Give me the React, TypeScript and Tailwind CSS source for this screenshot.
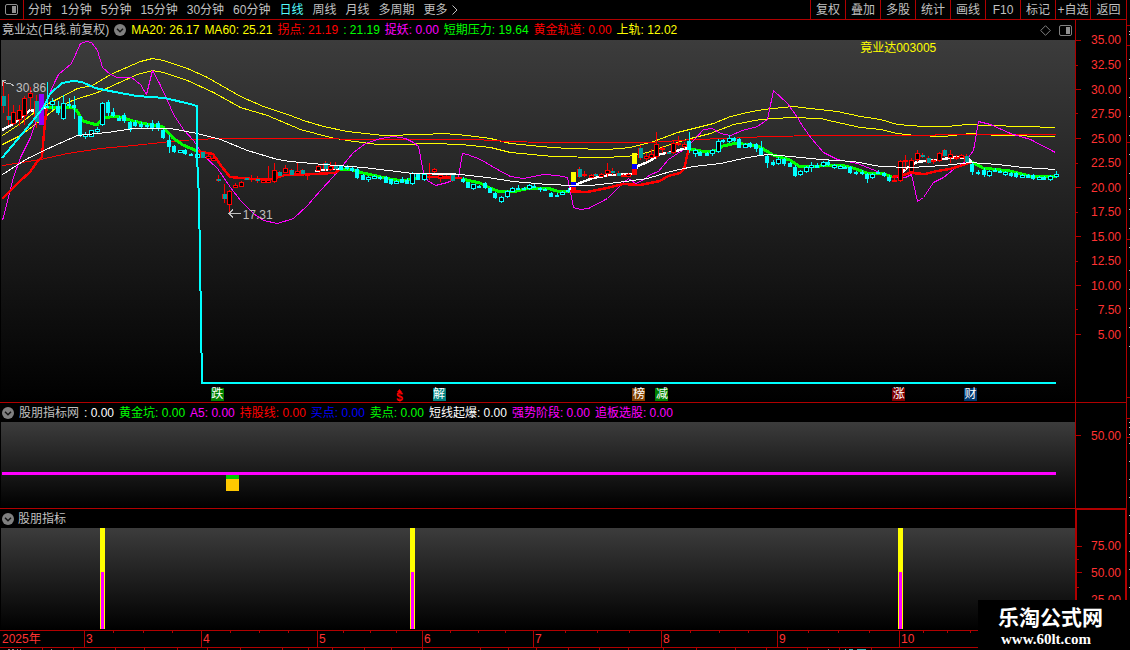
import type { ReactNode } from "react";

type Point = [number, number];
type Kind = "r" | "t" | "c" | "h";
type Candle = [Kind, number, number, number, number, number];

const CHART_W = 1075;

const periods = ["分时", "1分钟", "5分钟", "15分钟", "30分钟", "60分钟", "日线", "周线", "月线", "多周期"];
const tools = ["复权", "叠加", "多股", "统计", "画线", "F10", "标记", "+自选", "返回"];

const mainLegend = [
  { text: "MA20: 26.17", color: "text-[#ffff00]" },
  { text: "MA60: 25.21", color: "text-[#ffff00]" },
  { text: "拐点: 21.19", color: "text-[#ff0000]" },
  { text: ": 21.19", color: "text-[#00ff00]" },
  { text: "捉妖: 0.00", color: "text-[#ff00ff]" },
  { text: "短期压力: 19.64", color: "text-[#00ff00]" },
  { text: "黄金轨道: 0.00", color: "text-[#ff0000]" },
  { text: "上轨: 12.02", color: "text-[#ffff00]" },
];

const subLegend = [
  { text: ": 0.00", color: "text-white" },
  { text: "黄金坑: 0.00", color: "text-[#00ff00]" },
  { text: "A5: 0.00", color: "text-[#ff00ff]" },
  { text: "持股线: 0.00", color: "text-[#ff0000]" },
  { text: "买点: 0.00", color: "text-[#0000ff]" },
  { text: "卖点: 0.00", color: "text-[#00ff00]" },
  { text: "短线起爆: 0.00", color: "text-white" },
  { text: "强势阶段: 0.00", color: "text-[#ff00ff]" },
  { text: "追板选股: 0.00", color: "text-[#ff00ff]" },
];

const upperBand: Point[] = [[2,135],[20,123],[40,107],[58,98],[77,88],[92,85],[110,74],[140,61],[152,58],[163,60],[187,68],[207,77],[240,96],[263,106],[290,115],[303,120],[323,126],[347,131],[383,135],[423,134],[443,133],[467,135],[490,138],[510,143],[540,146],[567,148],[607,149],[630,147],[653,141],[677,132],[693,128],[713,123],[730,116],[747,112],[763,109],[793,106],[810,108],[837,111],[860,116],[880,119],[897,124],[923,126],[947,126],[967,124],[987,125],[1023,126],[1055,127]];
const lowerBand: Point[] = [[2,144],[20,135],[40,120],[55,108],[72,100],[97,92],[117,83],[137,74],[152,70],[163,72],[187,80],[213,92],[240,107],[267,115],[300,129],[330,137],[347,140],[377,144],[397,144],[433,143],[460,144],[490,147],[510,152],[553,156],[600,157],[627,156],[647,152],[667,145],[690,138],[710,133],[733,124],[760,119],[790,117],[820,118],[833,121],[860,127],[880,129],[897,133],[915,135],[943,136],[970,133],[997,135],[1055,136]];
const demon: Point[] = [[2,220],[8,197],[13,177],[20,157],[30,137],[35,122],[43,107],[55,80],[58,74],[71,63],[80,43],[86,41],[91,42],[97,50],[102,67],[110,74],[117,77],[131,77],[140,84],[146,94],[152,70],[159,83],[167,100],[173,114],[183,129],[193,140],[203,155],[217,168],[230,187],[240,200],[253,213],[263,220],[277,223],[293,218],[307,205],[320,190],[333,176],[343,164],[353,152],[365,143],[380,138],[393,136],[405,138],[413,142],[418,146],[423,172],[427,180],[435,185],[447,182],[458,177],[462,153],[467,154],[480,159],[497,169],[510,176],[523,178],[543,174],[557,175],[567,177],[573,207],[580,209],[588,208],[607,198],[622,183],[628,178],[635,183],[642,180],[650,174],[658,171],[668,159],[677,153],[685,148],[695,138],[703,129],[712,128],[720,133],[730,135],[742,130],[757,126],[767,119],[773,90],[787,103],[797,117],[803,127],[811,138],[823,152],[837,159],[857,163],[877,171],[890,177],[905,177],[911,174],[917,201],[923,197],[933,182],[943,177],[953,169],[965,161],[973,150],[978,121],[990,124],[1010,133],[1030,139],[1055,152]];
const longMa: Point[] = [[2,174],[27,158],[50,147],[77,135],[107,132],[133,128],[170,128],[197,133],[220,139],[247,150],[277,159],[290,161],[323,164],[363,167],[413,173],[460,174],[487,177],[513,181],[547,184],[573,185],[590,185],[617,182],[647,178],[670,171],[693,166],[720,163],[747,157],[767,154],[790,156],[820,159],[853,161],[880,166],[910,167],[943,165],[970,162],[997,164],[1023,167],[1055,169]];
const goldTrack: Point[] = [[2,165],[40,159],[67,153],[100,148],[133,145],[180,140],[217,138],[280,138],[397,139],[480,139],[487,140],[540,142],[650,142],[693,139],[727,138],[767,136],[820,135],[934,135],[936,134],[1055,134]];
const pressure: Point[] = [[2,157],[27,127],[43,107],[50,93],[62,82],[73,80],[82,81],[95,87],[115,91],[137,95],[165,97],[190,103],[197,105],[197,155],[199,197],[202,382],[1056,382]];

const supportRuns: Point[][] = [
  [[2,199],[20,181],[30,172],[37,162],[42,157],[44,133],[46,113],[47,107]],
  [[197,151],[213,154],[222,167],[230,177],[253,179],[273,179],[285,175],[313,174],[335,173],[340,169]],
  [[427,177],[462,178]],
  [[568,191],[587,192],[607,188],[623,184],[640,185],[660,181],[668,176],[680,173],[684,169],[689,148]],
  [[890,177],[900,176],[910,173],[925,174],[937,171],[950,169],[960,166],[972,162]],
];
const strongRuns: Point[][] = [
  [[2,130],[13,124],[23,116],[30,110],[35,111],[47,107]],
  [[315,171],[330,169],[340,169]],
  [[427,174],[456,174]],
  [[568,190],[577,184],[593,178],[610,175],[632,174],[638,166],[650,161],[660,154],[673,152],[683,149],[689,148]],
  [[898,176],[907,168],[917,162],[943,159],[957,157],[967,158],[972,162]],
];
const weakRuns: Point[][] = [
  [[47,107],[72,107],[77,111],[83,121],[97,125],[103,118],[117,116],[133,121],[147,124],[163,127],[173,138],[183,145],[197,151]],
  [[340,169],[353,170],[363,173],[390,179],[403,181],[420,177]],
  [[462,179],[480,183],[490,188],[500,192],[517,191],[530,188],[547,188],[557,191],[570,191]],
  [[690,149],[707,152],[717,150],[723,146],[737,143],[760,147],[773,155],[790,160],[800,167],[840,165],[853,168],[867,173],[882,173],[892,177]],
  [[972,162],[983,168],[1010,171],[1030,176],[1057,176]],
];

/* kind, x, high, open/close top, open/close bottom, low */
const candles: Candle[] = [
  ["t",3,80,96,106,113],["t",8,94,116,120,125],["r",13,105,112,124,125],["r",19,105,110,120,126],["r",24,96,98,116,125],["r",30,87,93,98,110],["t",36,95,101,122,128],
  ["c",47,82,106,108,108],["h",52,98,101,105,110],["c",58,101,106,113,115],["h",63,95,103,119,120],["c",69,98,104,106,108],["c",74,96,105,108,119],["c",80,116,116,136,137],["h",85,132,134,137,139],["h",91,130,130,137,137],["h",97,127,129,132,133],["h",102,102,103,125,126],["c",108,100,102,113,116],["c",113,108,112,116,117],["c",119,116,118,121,121],["c",124,113,115,121,123],["c",130,121,122,130,132],["c",135,120,122,126,127],["c",141,122,124,127,128],["c",147,123,125,127,128],["c",152,120,123,129,131],["c",158,121,123,129,131],["c",163,128,130,138,139],["c",169,135,140,147,153],["c",174,145,146,152,153],["h",180,150,150,153,153],["c",185,149,150,154,155],["c",191,153,154,156,156],["h",197,153,154,158,159],
  ["t",202,152,152,158,158],["r",208,154,156,159,159],["r",213,157,158,161,161],["t",218,175,179,181,182],["t",224,184,194,199,203],["r",229,190,191,205,213],["r",235,183,185,188,188],["r",241,181,182,187,187],["t",246,177,178,180,180],["r",251,175,178,180,182],["t",257,176,179,181,183],["r",263,179,180,183,183],["r",268,166,180,183,183],["r",274,163,170,182,183],["t",279,171,172,176,177],["r",285,165,168,173,173],["t",291,169,170,175,176],["r",297,163,171,174,175],["t",302,169,170,174,175],["r",307,173,174,175,180],["r",318,164,166,171,171],["t",325,161,163,169,171],["r",330,162,166,170,171],["t",335,162,166,169,170],
  ["c",341,165,166,170,170],["c",347,165,166,169,170],["c",352,167,168,171,172],["c",357,168,169,178,179],["c",363,174,175,180,180],["h",368,176,177,180,182],["h",374,175,176,179,179],["c",380,176,177,179,180],["c",386,176,177,183,183],["c",391,179,179,184,185],["h",396,180,181,184,184],["c",402,177,179,183,183],["c",407,178,180,184,184],["h",412,172,173,184,185],["c",418,173,174,180,180],["h",424,173,174,180,181],
  ["r",429,163,173,175,180],["r",434,168,169,172,174],["r",440,174,175,178,182],["r",446,175,176,178,179],["t",452,174,175,181,182],["c",463,177,179,182,183],["c",468,182,182,188,188],["h",473,184,184,189,190],["c",479,185,186,188,188],["c",485,182,183,188,189],["c",490,187,188,193,193],["c",495,192,193,198,199],["h",501,196,197,202,203],["h",507,190,191,197,198],["h",512,187,188,192,192],["c",518,185,188,190,190],["c",524,187,188,190,190],["h",529,184,185,189,190],["c",534,184,186,188,188],["c",540,187,188,190,192],["c",545,188,189,191,191],["c",551,192,193,197,197],["c",557,193,195,196,197],["h",562,191,192,195,195],["c",568,188,190,192,193],
  ["t",579,167,169,177,178],["r",584,171,174,176,177],["r",591,174,175,178,178],["t",595,173,174,176,177],["r",601,173,174,177,177],["r",607,163,170,174,177],["t",612,168,171,173,175],["t",618,171,173,176,176],["r",623,174,175,176,177],["r",628,173,174,177,177],["t",640,145,148,158,160],["r",646,153,156,159,161],["r",651,149,154,158,158],["r",656,132,144,157,159],["r",662,146,148,149,153],["t",668,151,152,154,154],["r",673,140,143,153,154],["r",678,136,143,145,146],["r",684,142,144,147,149],
  ["c",689,132,141,150,153],["h",695,149,150,154,157],["c",700,151,152,156,156],["c",707,152,153,156,156],["h",712,149,150,154,156],["h",718,139,141,152,153],["c",723,139,140,142,143],["h",729,135,138,142,143],["c",734,137,138,141,142],["c",739,138,139,148,148],["h",745,143,144,148,148],["c",750,142,143,147,148],["c",756,143,144,149,152],["c",761,141,148,155,156],["c",767,154,156,163,168],["c",773,160,162,165,166],["h",778,157,159,164,165],["c",784,158,159,164,166],["c",790,162,163,167,167],["c",795,165,167,176,177],["h",800,170,171,175,176],["h",806,166,167,172,173],["h",811,162,165,168,172],["c",817,163,165,168,168],["h",823,161,162,166,167],["c",828,160,162,165,166],["h",834,164,165,168,169],["h",840,165,166,169,169],["c",845,166,167,169,169],["c",850,166,167,173,174],["c",856,171,172,174,175],["c",862,170,172,174,175],["c",867,173,174,179,183],["h",872,173,174,178,179],["c",878,170,172,174,174],["c",884,172,173,176,177],["c",889,175,177,181,182],
  ["r",894,178,180,182,182],["r",900,160,161,181,182],["r",905,155,160,162,170],["r",911,158,160,172,174],["r",917,150,153,160,162],["t",922,153,155,157,158],["t",928,156,158,163,164],["r",933,159,160,162,164],["r",939,152,153,161,162],["t",944,149,150,156,157],["r",950,150,154,158,163],["r",956,155,157,159,160],["r",961,154,155,158,158],["t",966,154,156,162,162],
  ["c",972,162,164,172,175],["c",978,170,172,173,175],["c",984,168,170,175,177],["h",989,170,171,176,177],["c",995,168,170,172,172],["c",1000,170,171,173,173],["h",1005,171,172,175,176],["c",1011,172,173,176,177],["c",1016,172,173,177,178],["h",1022,174,175,178,178],["c",1028,174,175,178,178],["c",1033,174,175,179,180],["h",1039,176,177,180,180],["c",1044,176,177,180,180],["h",1050,175,176,180,181],["h",1056,171,174,177,178],
];

const blocks = [
  { x: 39, y: 94, w: 5, h: 31, fill: "#9000ff" },
  { x: 571, y: 172, w: 5, h: 10, fill: "#ffff00" },
  { x: 571, y: 182, w: 5, h: 5, fill: "#0000ff" },
  { x: 571, y: 187, w: 5, h: 6, fill: "#ff0000" },
  { x: 632, y: 153, w: 5, h: 11, fill: "#ffff00" },
  { x: 632, y: 164, w: 5, h: 5, fill: "#0000ff" },
  { x: 632, y: 169, w: 5, h: 6, fill: "#ff0000" },
];

const markers = [
  { x: 211, text: "跌", bg: "bg-[#008000]" },
  { x: 433, text: "解", bg: "bg-[#008080]" },
  { x: 633, text: "榜", bg: "bg-[#804000]" },
  { x: 656, text: "减", bg: "bg-[#008000]" },
  { x: 893, text: "涨", bg: "bg-[#800000]" },
  { x: 965, text: "财", bg: "bg-[#003870]" },
];

const priceTicks = ["35.00", "32.50", "30.00", "27.50", "25.00", "22.50", "20.00", "17.50", "15.00", "12.50", "10.00", "7.50", "5.00"].map(
  (label, i) => ({ label, at: (i * 24.5 + 0.5) / 362, major: i % 2 === 0 }),
);

const months = [
  { label: "3", x: 84, next: 201 },
  { label: "4", x: 201, next: 317 },
  { label: "5", x: 317, next: 422 },
  { label: "6", x: 422, next: 533 },
  { label: "7", x: 533, next: 661 },
  { label: "8", x: 661, next: 777 },
  { label: "9", x: 777, next: 899 },
  { label: "10", x: 899, next: 994 },
];

const stripDividers = [42, 73, 115, 144, 177, 207, 240, 282, 308, 332, 364, 391, 422, 480, 508, 536, 568, 599, 628, 663, 696, 735, 766, 807, 839, 871];
const signals = [100, 410, 898];
const pct = (x: number) => `${(x / CHART_W) * 100}%`;
const path = (pts: Point[]) => pts.map((p) => p.join(",")).join(" ");

function Line({ pts, color, width = 1 }: { pts: Point[]; color: string; width?: number }) {
  return <polyline points={path(pts)} fill="none" stroke={color} strokeWidth={width} strokeLinejoin="round" />;
}

function CandleBar({ candle }: { candle: Candle }) {
  const [kind, x, high, top, bottom, low] = candle;
  const edge = kind === "r" || kind === "t" ? "#ff0000" : "#00ffff";
  const hollow = kind === "r" || kind === "h";
  const h = Math.max(bottom - top, 2);
  return (
    <g>
      <rect x={x} y={high} width={1} height={Math.max(low - high, 1)} fill={edge} />
      <rect x={x - 2} y={top} width={kind === "c" ? 4 : 5} height={h} fill={kind === "t" ? "#00a0a0" : edge} />
      {kind === "t" && <rect x={x - 2} y={top} width={1} height={h} fill={edge} />}
      {hollow && h > 2 && <rect x={x - 1} y={top + 1} width={3} height={h - 2} fill="#000" />}
    </g>
  );
}

function PanelIcon({ dim = false }: { dim?: boolean }) {
  return (
    <svg viewBox="0 0 13 11" className="h-[11px] w-[13px]" aria-hidden="true">
      <rect x="0.5" y="0.5" width="12" height="10" rx="1.5" fill="none" stroke={dim ? "#808080" : "#909090"} />
      <rect x="7" y="2" width="4" height="7" fill="#909090" />
    </svg>
  );
}

function FoldButton({ label }: { label: string }) {
  return (
    <button type="button" aria-label={label} className="shrink-0">
      <svg viewBox="0 0 12 12" className="block h-3 w-3" aria-hidden="true">
        <circle cx="6" cy="6" r="6" fill="#808080" />
        <path d="M3 4.7 6 7.7 9 4.7" fill="none" stroke="#141414" strokeWidth="1.5" />
      </svg>
    </button>
  );
}

function Scale({ ticks, framed = false }: { ticks: { label?: string; at: number; major: boolean }[]; framed?: boolean }) {
  return (
    <div className={framed ? "relative w-[50px] border border-b-0 border-[#b00000]" : "relative w-[50px]"}>
      <div className={framed ? "absolute inset-x-0 top-[18px] bottom-0" : "absolute inset-x-0 top-5 bottom-0"}>
        {ticks.map((t) => (
          <div key={t.at} className="absolute inset-x-0 flex h-0 items-center" style={{ top: `${t.at * 100}%` }}>
            <span className={t.major ? "h-px w-[5px] bg-[#b00000]" : "h-px w-0.5 bg-[#b00000]"} />
            <span className={framed ? "ml-auto pr-1 text-[#ff3232]" : "ml-auto pr-[5px] text-[#ff3232]"}>{t.label}</span>
          </div>
        ))}
      </div>
    </div>
  );
}

function Pane({ size, header, scale, children }: { size: string; header: ReactNode; scale: ReactNode; children: ReactNode }) {
  return (
    <section className={`flex min-h-0 basis-0 border-b border-[#b00000] ${size}`}>
      <div className="flex min-w-0 flex-1 flex-col border-r border-[#b00000]">
        {header}
        <div className="relative ml-px min-h-0 flex-1 bg-[linear-gradient(#3c3c3c,#000000)]">{children}</div>
      </div>
      {scale}
    </section>
  );
}

function Plot({ top, height, children }: { top: number; height: number; children: ReactNode }) {
  return (
    <svg
      viewBox={`1 ${top} ${CHART_W - 1} ${height}`}
      preserveAspectRatio="none"
      shapeRendering="crispEdges"
      className="absolute inset-0 h-full w-full"
      aria-hidden="true"
    >
      {children}
    </svg>
  );
}

export default function App() {
  return (
    <div className="relative flex h-screen overflow-hidden bg-black font-['Liberation_Sans','Noto_Sans_CJK_SC',sans-serif] text-xs leading-4 whitespace-nowrap text-[#c0c0c0]">
      <div className="flex min-w-0 flex-1 flex-col border-r border-[#b00000]">
        <nav className="flex h-5 shrink-0 items-stretch border-b border-[#b00000]">
          <button type="button" aria-label="侧栏" className="flex w-6 items-center justify-center border-r border-[#b00000]">
            <PanelIcon />
          </button>
          <div className="flex flex-1 items-center gap-[9px] pl-1">
            {periods.map((p) => (
              <button key={p} type="button" className={p === "日线" ? "text-[#54fcfc]" : ""}>
                {p}
              </button>
            ))}
            <button type="button" className="flex items-center gap-1">
              更多
              <svg viewBox="0 0 6 10" className="h-2.5 w-1.5" aria-hidden="true">
                <path d="M.5.5 5 5 .5 9.5" fill="none" stroke="#c0c0c0" />
              </svg>
            </button>
          </div>
          {tools.map((t) => (
            <button key={t} type="button" className="w-[35px] border-l border-[#b00000] text-center last:w-9">
              {t}
            </button>
          ))}
        </nav>

        <Pane
          size="grow-[382]"
          header={
            <header className="flex h-5 shrink-0 items-center gap-[5px] pl-0.5">
              <h1>竟业达(日线.前复权)</h1>
              <FoldButton label="主图指标" />
              {mainLegend.map((l) => (
                <span key={l.text} className={l.color}>
                  {l.text}
                </span>
              ))}
              <div className="ml-auto flex items-center gap-2 pr-[3px]">
                <button type="button" aria-label="标注">
                  <svg viewBox="0 0 11 11" className="block h-[11px] w-[11px]" aria-hidden="true">
                    <path d="M5.5.7 10.3 5.5 5.5 10.3.7 5.5Z" fill="none" stroke="#808080" />
                  </svg>
                </button>
                <button type="button" aria-label="面板">
                  <PanelIcon dim />
                </button>
              </div>
            </header>
          }
          scale={<Scale ticks={priceTicks} />}
        >
          <Plot top={40} height={362}>
            <g transform="translate(0.5 0.5)">
              <Line pts={upperBand} color="#ffff00" />
              <Line pts={lowerBand} color="#ffff00" />
              <Line pts={goldTrack} color="#ff0000" />
              <Line pts={demon} color="#ff00ff" />
            </g>
            {supportRuns.map((r, i) => (
              <Line key={i} pts={r} color="#ff0000" width={2.4} />
            ))}
            {strongRuns.map((r, i) => (
              <Line key={i} pts={r} color="#ffffff" width={2.4} />
            ))}
            {weakRuns.map((r, i) => (
              <Line key={i} pts={r} color="#00ff00" width={3} />
            ))}
            {candles.map((c) => (
              <CandleBar key={c[1]} candle={c} />
            ))}
            {blocks.map((b) => (
              <rect key={`${b.x}-${b.y}`} x={b.x} y={b.y} width={b.w} height={b.h} fill={b.fill} />
            ))}
            <g transform="translate(0.5 0.5)">
              <Line pts={longMa} color="#ffffff" />
            </g>
            <g transform="translate(0 1)">
              <Line pts={pressure} color="#00ffff" width={2} />
            </g>
            <path d="M2.5 86V80.500H6M2.500 81.500 7 83.500 10 83.500 14 86" fill="none" stroke="#c0c0c0" />
            <path d="M229 213.500H241M233 209.500 229 213.500 233 217.500" fill="none" stroke="#c0c0c0" />
          </Plot>
          <span className="absolute top-[11%] left-[1.4%]">30.86</span>
          <span className="absolute top-[46%] left-[22.5%]">17.31</span>
          <span className="absolute top-0 left-[80%] text-[#ffff00]">竟业达003005</span>
          {markers.map((m) => (
            <span
              key={m.x}
              className={`absolute bottom-px h-[13px] w-[13px] text-center leading-[13px] text-white ${m.bg}`}
              style={{ left: pct(m.x - 1) }}
            >
              {m.text}
            </span>
          ))}
          <span className="absolute bottom-0 left-[36.8%] flex flex-col items-center font-bold text-[#ff0000]">
            <svg viewBox="0 0 5 3" className="h-[3px] w-[5px]" aria-hidden="true">
              <path d="M2.500 0 5 3H0Z" fill="#ff0000" />
            </svg>
            <span className="leading-[10px]">$</span>
          </span>
        </Pane>

        <Pane
          size="grow-[105]"
          header={
            <header className="flex h-[19px] shrink-0 items-center gap-[5px] pl-0.5">
              <FoldButton label="股朋指标网" />
              <h2>股朋指标网</h2>
              {subLegend.map((l) => (
                <span key={l.text} className={l.color}>
                  {l.text}
                </span>
              ))}
            </header>
          }
          scale={<Scale ticks={[{ label: "50.00", at: 0.15, major: true }]} />}
        >
          <Plot top={422} height={86}>
            <rect x="2" y="472" width="1054" height="3" fill="#ff00ff" />
            <rect x="226" y="475" width="13" height="4" fill="#00c800" />
            <rect x="226" y="479" width="13" height="12" fill="#ffc800" />
          </Plot>
        </Pane>

        <Pane
          size="grow-[121]"
          header={
            <header className="flex h-[19px] shrink-0 items-center gap-1 pl-0.5">
              <FoldButton label="股朋指标" />
              <h2>股朋指标</h2>
            </header>
          }
          scale={
            <Scale
              framed
              ticks={[
                { label: "75.00", at: 0.18, major: true },
                { at: 0.31, major: false },
                { label: "50.00", at: 0.44, major: true },
                { at: 0.58, major: false },
                { label: "25.00", at: 0.71, major: true },
              ]}
            />
          }
        >
          <Plot top={528} height={102}>
            {signals.map((x) => (
              <g key={x}>
                <rect x={x} y="528" width="5" height="101" fill="#ffff00" />
                <rect x={x + 1} y="572" width="3" height="57" fill="#ff00ff" />
              </g>
            ))}
          </Plot>
        </Pane>

        <div className="mr-[51px] h-4 shrink-0 text-[#ff3232]">
          <div className="relative h-full">
            <span className="absolute left-0.5">2025年</span>
            {months.map((m) => (
              <span key={m.x} className="absolute h-full border-l border-[#b00000] pl-px" style={{ left: pct(m.x) }}>
                {m.label}
              </span>
            ))}
            {months.flatMap((m) =>
              [1, 2, 3].map((k) => (
                <span
                  key={`${m.x}-${k}`}
                  className="absolute h-0.5 w-px bg-[#b00000]"
                  style={{ left: pct(m.x + ((m.next - m.x) * k) / 4) }}
                />
              )),
            )}
          </div>
        </div>
        <svg viewBox="0 0 1126 3" preserveAspectRatio="none" shapeRendering="crispEdges" className="h-[3px] w-full shrink-0 border-t border-[#b00000]" aria-hidden="true">
          {stripDividers.map((x) => (
            <rect key={x} x={x} y="0" width="1" height="3" fill="#b00000" />
          ))}
          <path d="M8 2.500h2m2 0h2m3 0h1m2 0h1M51 2.500h1M828 2.500h1" stroke="#c0c0c0" />
          <path d="M845 2.500h1m3 0h4m4 0h9" stroke="#54fcfc" />
        </svg>
      </div>

      <svg viewBox="0 0 3 650" preserveAspectRatio="none" shapeRendering="crispEdges" className="h-full w-[3px] shrink-0" aria-hidden="true">
        {[25, 45, 142, 239, 397, 418, 437].map((y) => (
          <rect key={y} x="0" y={y} width="3" height="1" fill="#b00000" />
        ))}
        {[31, 34, 59, 78, 97, 116, 135, 154, 173, 198, 209, 228, 247, 270, 289, 308, 327, 346, 422, 427, 434, 443, 461, 479, 497, 515, 533, 551, 569, 587].map((y) => (
          <rect key={y} x="2" y={y} width="1" height="1" fill="#c0c0c0" />
        ))}
      </svg>

      <aside className="absolute right-0 bottom-0 flex h-[50px] w-[152px] flex-col items-start bg-black pt-1.5 pl-5 text-white">
        <strong className="text-[21px] leading-6 font-bold">乐淘公式网</strong>
        <a href="#" className="pl-[3px] font-['Liberation_Serif',serif] text-[15px] leading-[18px] font-bold">
          www.60lt.com
        </a>
      </aside>
    </div>
  );
}
